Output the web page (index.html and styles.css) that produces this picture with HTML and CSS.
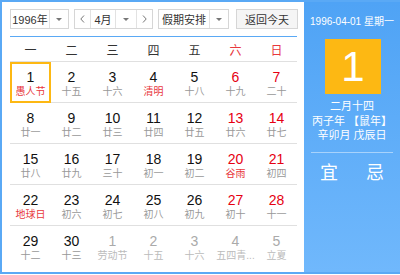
FILE: index.html
```html
<!DOCTYPE html>
<html lang="zh-CN">
<head>
<meta charset="UTF-8">
<meta name="viewport" content="width=device-width, initial-scale=1.0">
<title>万年历</title>
<link rel="stylesheet" href="styles.css">
</head>
<body>
    <div class="calendar">
        <div class="main">
            <div class="toolbar">
                <div class="select year">
                    <span class="select-text">1996年</span>
                    <span class="select-arrow"><i class="tri"></i></span>
                </div>
                <div class="select month">
                    <span class="nav"><svg width="7" height="10" viewBox="0 0 7 10"><path d="M5 1.5 L1.8 5 L5 8.5" fill="none" stroke="#777" stroke-width="1"/></svg></span>
                    <span class="select-text">4月</span>
                    <span class="select-arrow"><i class="tri"></i></span>
                    <span class="nav"><svg width="7" height="10" viewBox="0 0 7 10"><path d="M2 1.5 L5.2 5 L2 8.5" fill="none" stroke="#777" stroke-width="1"/></svg></span>
                </div>
                <div class="select holiday">
                    <span class="select-text">假期安排</span>
                    <span class="select-arrow"><i class="tri"></i></span>
                </div>
                <button class="today-btn">返回今天</button>
            </div>

            <div class="week-head">
                <span>一</span><span>二</span><span>三</span><span>四</span><span>五</span>
                <span class="weekend">六</span><span class="weekend">日</span>
            </div>

            <div class="days">
                <div class="day today"><b>1</b><em class="fest">愚人节</em></div>
                <div class="day"><b>2</b><em>十五</em></div>
                <div class="day"><b>3</b><em>十六</em></div>
                <div class="day"><b>4</b><em class="fest">清明</em></div>
                <div class="day"><b>5</b><em>十八</em></div>
                <div class="day weekend"><b>6</b><em>十九</em></div>
                <div class="day weekend"><b>7</b><em>二十</em></div>

                <div class="day"><b>8</b><em>廿一</em></div>
                <div class="day"><b>9</b><em>廿二</em></div>
                <div class="day"><b>10</b><em>廿三</em></div>
                <div class="day"><b>11</b><em>廿四</em></div>
                <div class="day"><b>12</b><em>廿五</em></div>
                <div class="day weekend"><b>13</b><em>廿六</em></div>
                <div class="day weekend"><b>14</b><em>廿七</em></div>

                <div class="day"><b>15</b><em>廿八</em></div>
                <div class="day"><b>16</b><em>廿九</em></div>
                <div class="day"><b>17</b><em>三十</em></div>
                <div class="day"><b>18</b><em>初一</em></div>
                <div class="day"><b>19</b><em>初二</em></div>
                <div class="day weekend"><b>20</b><em class="fest">谷雨</em></div>
                <div class="day weekend"><b>21</b><em>初四</em></div>

                <div class="day"><b>22</b><em class="fest">地球日</em></div>
                <div class="day"><b>23</b><em>初六</em></div>
                <div class="day"><b>24</b><em>初七</em></div>
                <div class="day"><b>25</b><em>初八</em></div>
                <div class="day"><b>26</b><em>初九</em></div>
                <div class="day weekend"><b>27</b><em>初十</em></div>
                <div class="day weekend"><b>28</b><em>十一</em></div>

                <div class="day last"><b>29</b><em>十二</em></div>
                <div class="day last"><b>30</b><em>十三</em></div>
                <div class="day last other"><b>1</b><em>劳动节</em></div>
                <div class="day last other"><b>2</b><em>十五</em></div>
                <div class="day last other"><b>3</b><em>十六</em></div>
                <div class="day last other"><b>4</b><em>五四青...</em></div>
                <div class="day last other"><b>5</b><em>立夏</em></div>
            </div>
        </div>

        <div class="side">
            <div class="side-date">1996-04-01 星期一</div>
            <div class="side-day">1</div>
            <div class="side-lunar">
                <p>二月十四</p>
                <p>丙子年 【鼠年】</p>
                <p>辛卯月 戊辰日</p>
            </div>
            <div class="side-line"></div>
            <div class="side-yiji">
                <span>宜</span>
                <span>忌</span>
            </div>
        </div>
    </div>
</body>
</html>
```

FILE: styles.css
```css
body {
    margin: 0;
    font-family: "Liberation Sans", "Noto Sans CJK SC", sans-serif;
    background-color: #fff;
}
.calendar {
    display: flex;
    width: 400px;
    height: 274px;
    box-sizing: border-box;
    border: 2px solid #5aa9f5;
    border-right: none;
}
.main {
    width: 302px;
    padding: 7px 6px 0 8px;
    box-sizing: border-box;
    background-color: #fff;
}
.toolbar {
    display: flex;
    align-items: center;
    height: 20px;
    margin-bottom: 7px;
}
.select {
    display: flex;
    height: 20px;
    box-sizing: border-box;
    border: 1px solid #d6d6d6;
    font-size: 11px;
    color: #333;
    background-color: #fff;
    white-space: nowrap;
}
.select-text {
    display: flex;
    align-items: center;
    justify-content: center;
    flex: 1;
}
.select-arrow {
    display: flex;
    align-items: center;
    justify-content: center;
    width: 18px;
    border-left: 1px solid #e2e2e2;
}
.tri {
    width: 0;
    height: 0;
    border-left: 3px solid transparent;
    border-right: 3px solid transparent;
    border-top: 3px solid #777;
}
.year {
    width: 59px;
}
.month {
    width: 79px;
    margin-left: 5px;
}
.month .select-arrow {
    width: 20px;
}
.nav {
    display: flex;
    align-items: center;
    justify-content: center;
    width: 15px;
}
.nav:first-child {
    border-right: 1px solid #e2e2e2;
}
.nav:last-child {
    border-left: 1px solid #e2e2e2;
}
.holiday {
    width: 71px;
    margin-left: 5px;
}
.today-btn {
    width: 62px;
    height: 20px;
    margin-left: 7px;
    padding: 0;
    border: 1px solid #d6d6d6;
    background-color: #f5f5f5;
    font-family: inherit;
    font-size: 11px;
    color: #333;
    white-space: nowrap;
}
.week-head {
    display: grid;
    grid-template-columns: repeat(7, 1fr);
    width: 287px;
    height: 24px;
    border-top: 1px solid #5aa9f5;
    border-bottom: 1px solid #e0e0e0;
    font-size: 12px;
    color: #333;
}
.week-head span {
    display: flex;
    align-items: center;
    justify-content: center;
}
.week-head .weekend {
    color: #e8383d;
}
.days {
    display: grid;
    grid-template-columns: repeat(7, 1fr);
    width: 287px;
}
.day {
    display: flex;
    flex-direction: column;
    align-items: center;
    height: 41px;
    box-sizing: border-box;
    padding-top: 7px;
    border-bottom: 1px solid #e0e0e0;
}
.day.last {
    border-bottom: none;
}
.day b {
    font-weight: normal;
    font-size: 14px;
    line-height: 16px;
    color: #111;
}
.day em {
    font-style: normal;
    font-size: 10px;
    line-height: 13px;
    color: #999;
    white-space: nowrap;
}
.day.weekend b {
    color: #e60012;
}
.day em.fest {
    color: #e8383d;
}
.day.other b {
    color: #aaa;
}
.day.other em {
    color: #bbb;
}
.day.today {
    border: 2px solid #fdb813;
    padding-top: 5px;
}
.side {
    flex: 1;
    display: flex;
    flex-direction: column;
    align-items: center;
    background: linear-gradient(#4fa3f5, #70b8fc);
    color: #fff;
}
.side-date {
    margin-top: 13px;
    font-size: 10px;
    line-height: 13px;
    white-space: nowrap;
}
.side-day {
    width: 56px;
    height: 55px;
    margin-top: 11px;
    margin-left: 2px;
    background-color: #fdb813;
    font-size: 42px;
    line-height: 55px;
    text-align: center;
}
.side-lunar {
    margin-top: 5px;
    font-size: 11px;
    line-height: 14.5px;
    text-align: center;
    white-space: nowrap;
}
.side-lunar p {
    margin: 0;
}
.side-line {
    width: 82px;
    height: 1px;
    margin-top: 9px;
    background-color: rgba(255, 255, 255, 0.45);
}
.side-yiji {
    display: flex;
    gap: 28px;
    margin-top: 9px;
    font-size: 18px;
    line-height: 22px;
}
```
